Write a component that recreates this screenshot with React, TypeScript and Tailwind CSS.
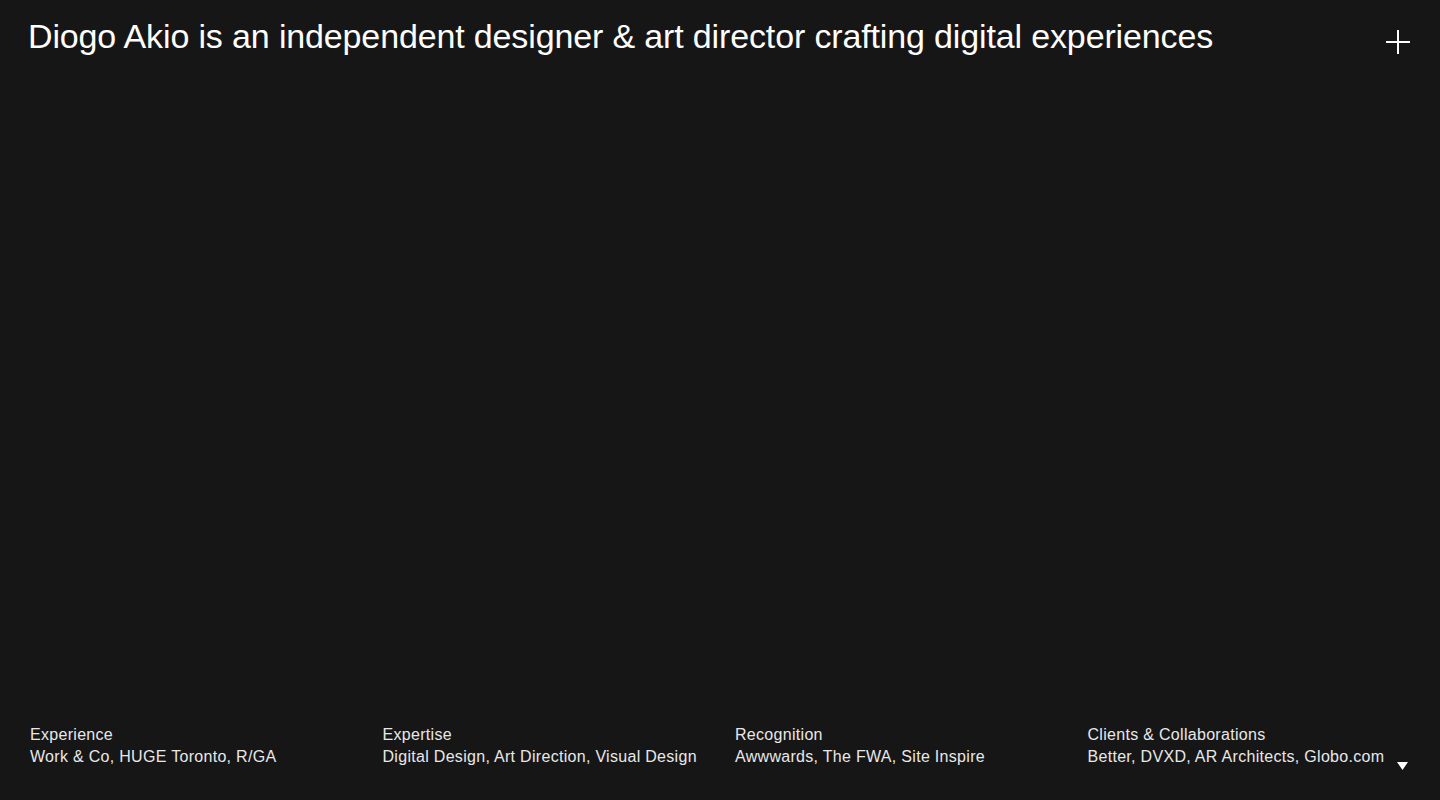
export default function App() {
  const items = [
    { label: "Experience", value: "Work & Co, HUGE Toronto, R/GA" },
    { label: "Expertise", value: "Digital Design, Art Direction, Visual Design" },
    { label: "Recognition", value: "Awwwards, The FWA, Site Inspire" },
    { label: "Clients & Collaborations", value: "Better, DVXD, AR Architects, Globo.com" },
  ];

  return (
    <div className="h-[800px] w-full bg-[#161616] text-white flex flex-col justify-between font-['Liberation_Sans',Arial,sans-serif] antialiased">
      <header className="flex items-start justify-between pl-[28px] pr-[30px] pt-[16px]">
        <h1 className="text-[34px] leading-[40px] font-normal tracking-[-0.14px]">
          Diogo Akio is an independent designer &amp; art director crafting digital experiences
        </h1>
        <button className="mt-[14px] w-[24px] h-[24px] relative" aria-label="Open">
          <span className="absolute left-0 top-[11px] w-[24px] h-[2px] bg-white" />
          <span className="absolute top-0 left-[11px] h-[24px] w-[2px] bg-white" />
        </button>
      </header>

      <footer className="grid grid-cols-4 gap-[30px] px-[30px] pb-[32px] text-[16px] leading-[22px] tracking-[0.3px] text-[#e8e8e8]">
        {items.map((item, i) => (
          <div key={item.label} className="flex items-end justify-between">
            <div>
              <p>{item.label}</p>
              <p>{item.value}</p>
            </div>
            {i === items.length - 1 && (
              <svg width="11" height="8" viewBox="0 0 11 8" className="mb-[-2px] mr-[2px]">
                <path d="M0 0H11L5.5 8Z" fill="#fff" />
              </svg>
            )}
          </div>
        ))}
      </footer>
    </div>
  );
}
